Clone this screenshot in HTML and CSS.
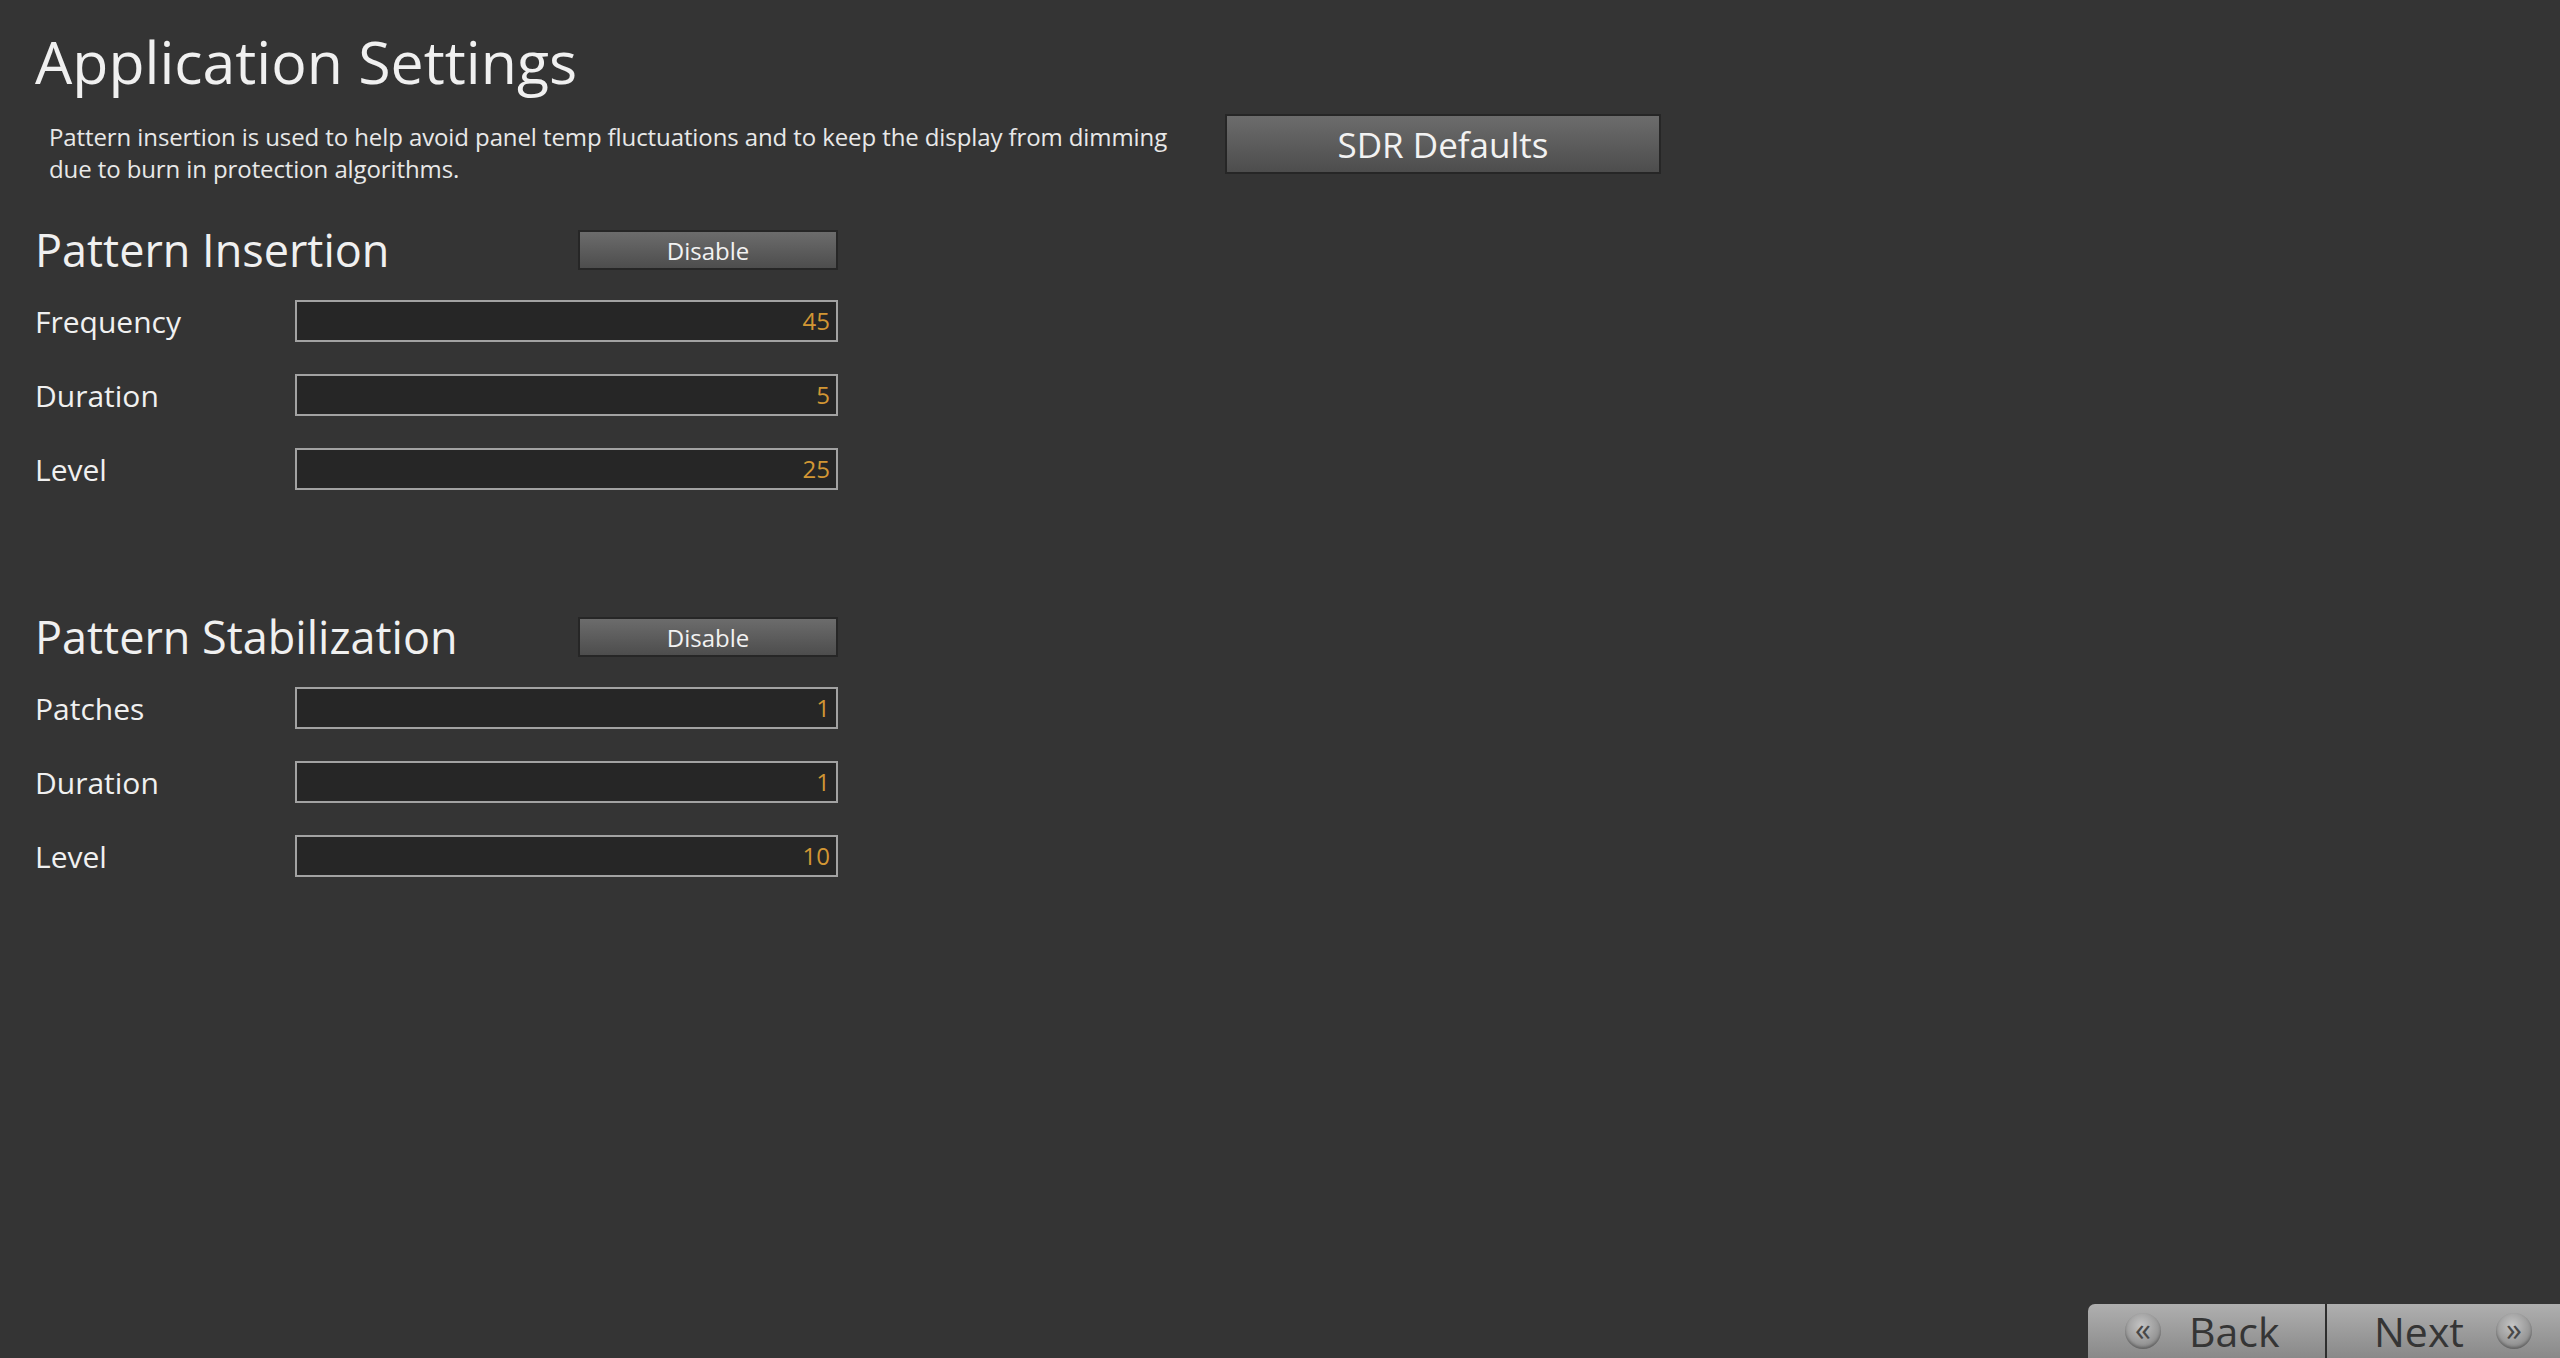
FILE: index.html
```html
<!DOCTYPE html>
<html lang="en">
<head>
    <meta charset="UTF-8">
    <meta name="viewport" content="width=device-width, initial-scale=1.0">
    <title>Application Settings</title>
    <link rel="stylesheet" href="styles.css">
</head>
<body>
    <div class="page">
        <h1 class="title">Application Settings</h1>

        <div class="intro">
            <p class="intro-text">Pattern insertion is used to help avoid panel temp fluctuations and to keep the display from dimming due to burn in protection algorithms.</p>
            <button class="btn btn-large">SDR Defaults</button>
        </div>

        <div class="section section-insertion">
            <div class="section-head">
                <h2>Pattern Insertion</h2>
                <button class="btn btn-small">Disable</button>
            </div>
            <div class="fields">
                <label class="field-label">Frequency</label>
                <div class="field-value">45</div>
                <label class="field-label">Duration</label>
                <div class="field-value">5</div>
                <label class="field-label">Level</label>
                <div class="field-value">25</div>
            </div>
        </div>

        <div class="section section-stabilization">
            <div class="section-head">
                <h2>Pattern Stabilization</h2>
                <button class="btn btn-small">Disable</button>
            </div>
            <div class="fields">
                <label class="field-label">Patches</label>
                <div class="field-value">1</div>
                <label class="field-label">Duration</label>
                <div class="field-value">1</div>
                <label class="field-label">Level</label>
                <div class="field-value">10</div>
            </div>
        </div>

        <div class="nav">
            <button class="nav-btn nav-back"><span class="nav-icon">&laquo;</span><span>Back</span></button>
            <button class="nav-btn nav-next"><span>Next</span><span class="nav-icon">&raquo;</span></button>
        </div>
    </div>
</body>
</html>
```

FILE: styles.css
```css
body {
    margin: 0;
    background-color: #343434;
    color: #f0f0f0;
    font-family: "Open Sans", "Noto Sans", sans-serif;
    height: 100vh;
    overflow: hidden;
}

.page {
    display: flex;
    flex-direction: column;
    height: 100vh;
    box-sizing: border-box;
    padding: 0 0 0 35px;
}

.title {
    margin: 25px 0 0 0;
    font-size: 59px;
    line-height: 72px;
    font-weight: 400;
}

.intro {
    display: flex;
    align-items: flex-start;
    margin-top: 17px;
}

.intro-text {
    width: 1140px;
    margin: 0;
    padding: 7px 0 0 14px;
    font-size: 24px;
    line-height: 32px;
    letter-spacing: -0.1px;
    color: #e8e8e8;
}

.btn {
    font-family: inherit;
    color: #f2f2f2;
    border: 2px solid #262626;
    background: linear-gradient(#6c6c6c, #4d4d4d);
    cursor: pointer;
}

.btn-large {
    width: 436px;
    height: 60px;
    margin-left: 36px;
    font-size: 35px;
}

.btn-small {
    width: 260px;
    height: 40px;
    font-size: 24px;
    padding: 0;
}

.section {
    width: 803px;
}

.section-insertion {
    margin-top: 45px;
}

.section-stabilization {
    margin-top: 127px;
}

.section-head {
    display: flex;
    justify-content: space-between;
    align-items: center;
    height: 40px;
}

.section-head h2 {
    margin: 0;
    font-size: 45px;
    font-weight: 400;
    line-height: 40px;
}

.fields {
    display: grid;
    grid-template-columns: 260px 1fr;
    row-gap: 32px;
    margin-top: 30px;
    align-items: center;
}

.field-label {
    font-size: 30px;
}

.field-value {
    height: 42px;
    box-sizing: border-box;
    border: 2px solid #a2a2a2;
    background-color: #262626;
    color: #d29634;
    font-size: 24px;
    line-height: 38px;
    text-align: right;
    padding-right: 6px;
}

.nav {
    margin-top: auto;
    align-self: flex-end;
    display: flex;
}

.nav-btn {
    display: flex;
    align-items: center;
    height: 54px;
    border: none;
    background: linear-gradient(#afafaf, #898989);
    color: #353535;
    font-family: inherit;
    font-size: 41px;
    padding: 0;
}

.nav-back {
    width: 239px;
    border-top-left-radius: 7px;
    padding-left: 37px;
    gap: 28px;
    border-right: 2px solid #2e2e2e;
}

.nav-next {
    width: 233px;
    padding-left: 47px;
    gap: 32px;
}

.nav-icon {
    width: 36px;
    height: 36px;
    border-radius: 50%;
    background: radial-gradient(circle at 45% 35%, #c4c4c4, #9a9a9a 55%, #767676);
    box-shadow: inset 0 -2px 3px rgba(0, 0, 0, 0.3);
    color: #484848;
    font-size: 32px;
    line-height: 32px;
    text-align: center;
}
```
